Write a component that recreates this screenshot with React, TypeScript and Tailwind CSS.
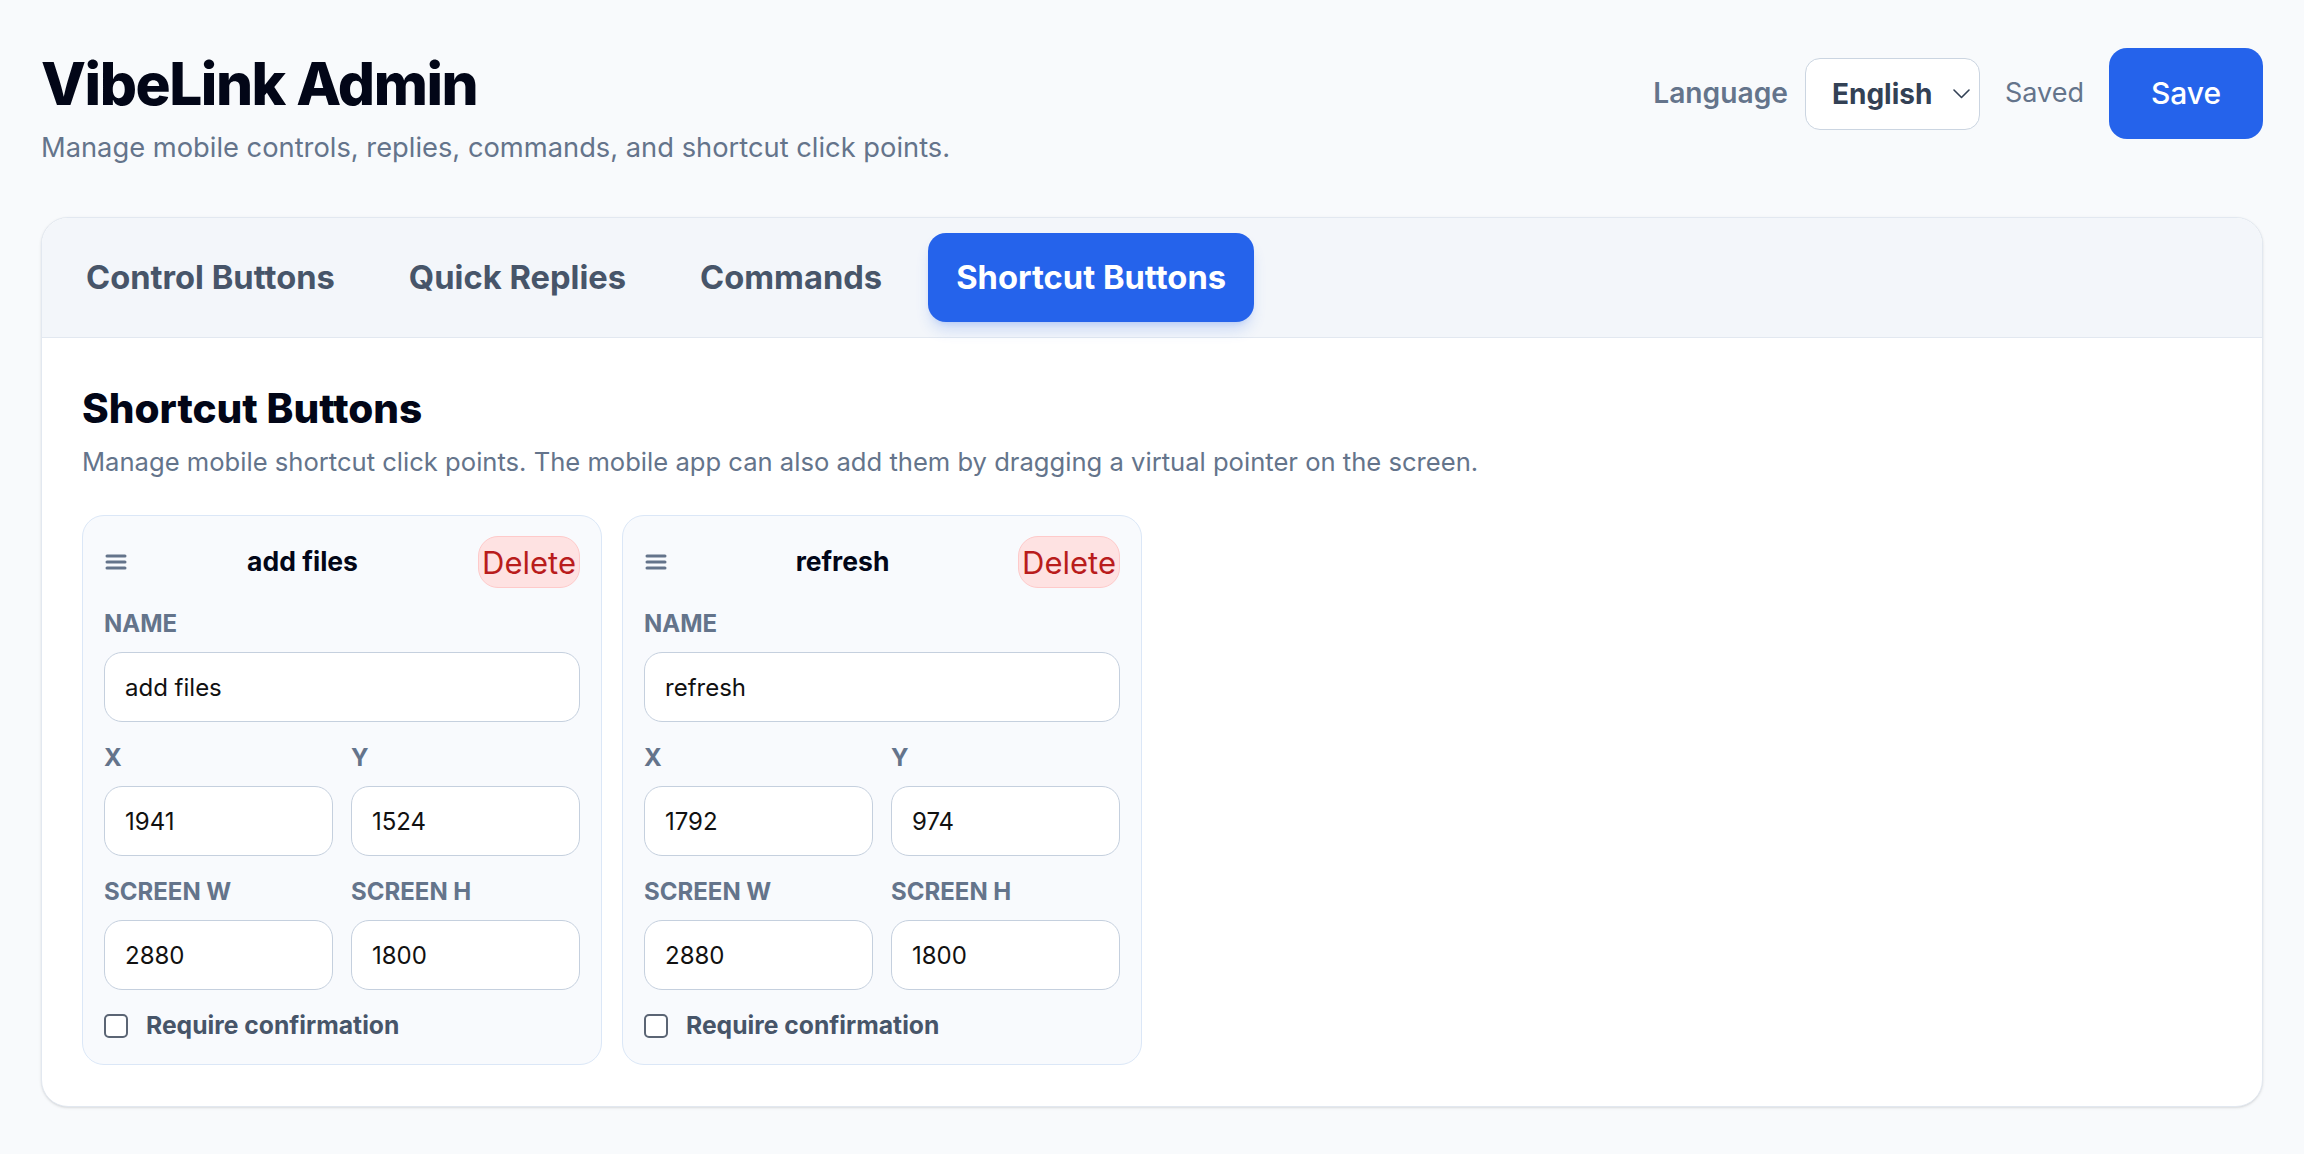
import React from "react";

type Shortcut = { name: string; x: string; y: string; w: string; h: string };

const shortcuts: Shortcut[] = [
  { name: "add files", x: "1941", y: "1524", w: "2880", h: "1800" },
  { name: "refresh", x: "1792", y: "974", w: "2880", h: "1800" },
];

const tabs = ["Control Buttons", "Quick Replies", "Commands", "Shortcut Buttons"];

function Field({ label, value }: { label: string; value: string }) {
  return (
    <div className="flex flex-col min-w-0">
      <label className="text-[24px] leading-[36px] font-bold text-[#64748b]">{label}</label>
      <input
        defaultValue={value}
        className="mt-[10px] h-[70px] w-full rounded-[18px] border-[1.5px] border-[#c5d0de] bg-white px-[20px] text-[24px] text-[#111] outline-none"
      />
    </div>
  );
}

function ShortcutCard({ item }: { item: Shortcut }) {
  return (
    <div className="w-[520px] rounded-[22px] border-[1.5px] border-[#dbe7f7] bg-[#f8fafd] px-[21px] py-[20px] flex flex-col gap-[18px]">
      <div className="flex items-center h-[52px]">
        <svg width="22" height="18" viewBox="0 0 22 18" className="ml-[1px] shrink-0">
          <g stroke="#64748b" strokeWidth="3" strokeLinecap="round">
            <line x1="2" y1="3" x2="20" y2="3" />
            <line x1="2" y1="9" x2="20" y2="9" />
            <line x1="2" y1="15" x2="20" y2="15" />
          </g>
        </svg>
        <div className="flex-1 text-center text-[26.5px] font-bold text-[#020617]">{item.name}</div>
        <button className="h-[52px] rounded-[20px] border-[1.5px] border-[#fecaca] bg-[#fee2e2] px-[3px] text-[31px] leading-none text-[#b91c1c]">
          Delete
        </button>
      </div>
      <Field label="NAME" value={item.name} />
      <div className="grid grid-cols-2 gap-x-[18px]">
        <Field label="X" value={item.x} />
        <Field label="Y" value={item.y} />
      </div>
      <div className="grid grid-cols-2 gap-x-[18px]">
        <Field label="SCREEN W" value={item.w} />
        <Field label="SCREEN H" value={item.h} />
      </div>
      <label className="flex items-center gap-[18px] h-[36px]">
        <input
          type="checkbox"
          className="appearance-none w-[24px] h-[24px] rounded-[5px] border-2 border-[#5b6574] bg-white"
        />
        <span className="text-[24.7px] font-bold text-[#475569]">Require confirmation</span>
      </label>
    </div>
  );
}

export default function App() {
  return (
    <div className="min-h-screen bg-[#f8fafc] font-['Inter',sans-serif] px-[41px] pt-[48px] pb-[50px]">
      {/* Header */}
      <header className="flex justify-between items-start">
        <div>
          <h1 className="mt-[3px] text-[58.5px] leading-[66px] font-extrabold tracking-tight text-[#020617]">
            VibeLink Admin
          </h1>
          <p className="mt-[12px] text-[27.3px] leading-[38px] text-[#64748b]">
            Manage mobile controls, replies, commands, and shortcut click points.
          </p>
        </div>
        <div className="flex items-center h-[91px]">
          <span className="text-[28.2px] font-semibold text-[#64748b]">Language</span>
          <div className="ml-[17px] flex items-center justify-between w-[175px] h-[72px] rounded-[15px] border-[1.5px] border-[#cbd5e1] bg-white pl-[26px] pr-[9px]">
            <span className="text-[28px] font-bold text-[#334155]">English</span>
            <svg width="17" height="10" viewBox="0 0 17 10">
              <path d="M1 1l7.5 7.5L16 1" fill="none" stroke="#334155" strokeWidth="1.6" strokeLinecap="round" strokeLinejoin="round" />
            </svg>
          </div>
          <span className="ml-[25px] text-[27px] text-[#64748b]">Saved</span>
          <button className="ml-[25px] w-[154px] h-[91px] rounded-[18px] bg-[#2563eb] text-[30px] font-medium text-white">
            Save
          </button>
        </div>
      </header>

      {/* Main card */}
      <main className="mt-[50px] rounded-[27px] border-[1.5px] border-[#e2e8f0] bg-white shadow-sm overflow-hidden">
        <nav className="flex items-center gap-[18px] bg-[#f3f6fa] border-b-[1.5px] border-[#e2e8f0] px-[16px] py-[15px]">
          {tabs.map((t) => (
            <button
              key={t}
              className={
                t === "Shortcut Buttons"
                  ? "h-[89px] px-[28px] rounded-[18px] bg-[#2563eb] text-white text-[32.7px] font-bold shadow-lg shadow-[#2563eb]/20"
                  : "h-[89px] px-[28px] rounded-[18px] text-[#475569] text-[32.7px] font-bold"
              }
            >
              {t}
            </button>
          ))}
        </nav>
        <section className="px-[40px] pt-[47px] pb-[41px]">
          <h2 className="text-[40.5px] leading-[48px] font-extrabold text-[#020617]">Shortcut Buttons</h2>
          <p className="mt-[11px] text-[25.6px] leading-[35px] text-[#64748b]">
            Manage mobile shortcut click points. The mobile app can also add them by dragging a virtual pointer on the
            screen.
          </p>
          <div className="mt-[36px] flex gap-[20px]">
            {shortcuts.map((s) => (
              <ShortcutCard key={s.name} item={s} />
            ))}
          </div>
        </section>
      </main>
    </div>
  );
}
